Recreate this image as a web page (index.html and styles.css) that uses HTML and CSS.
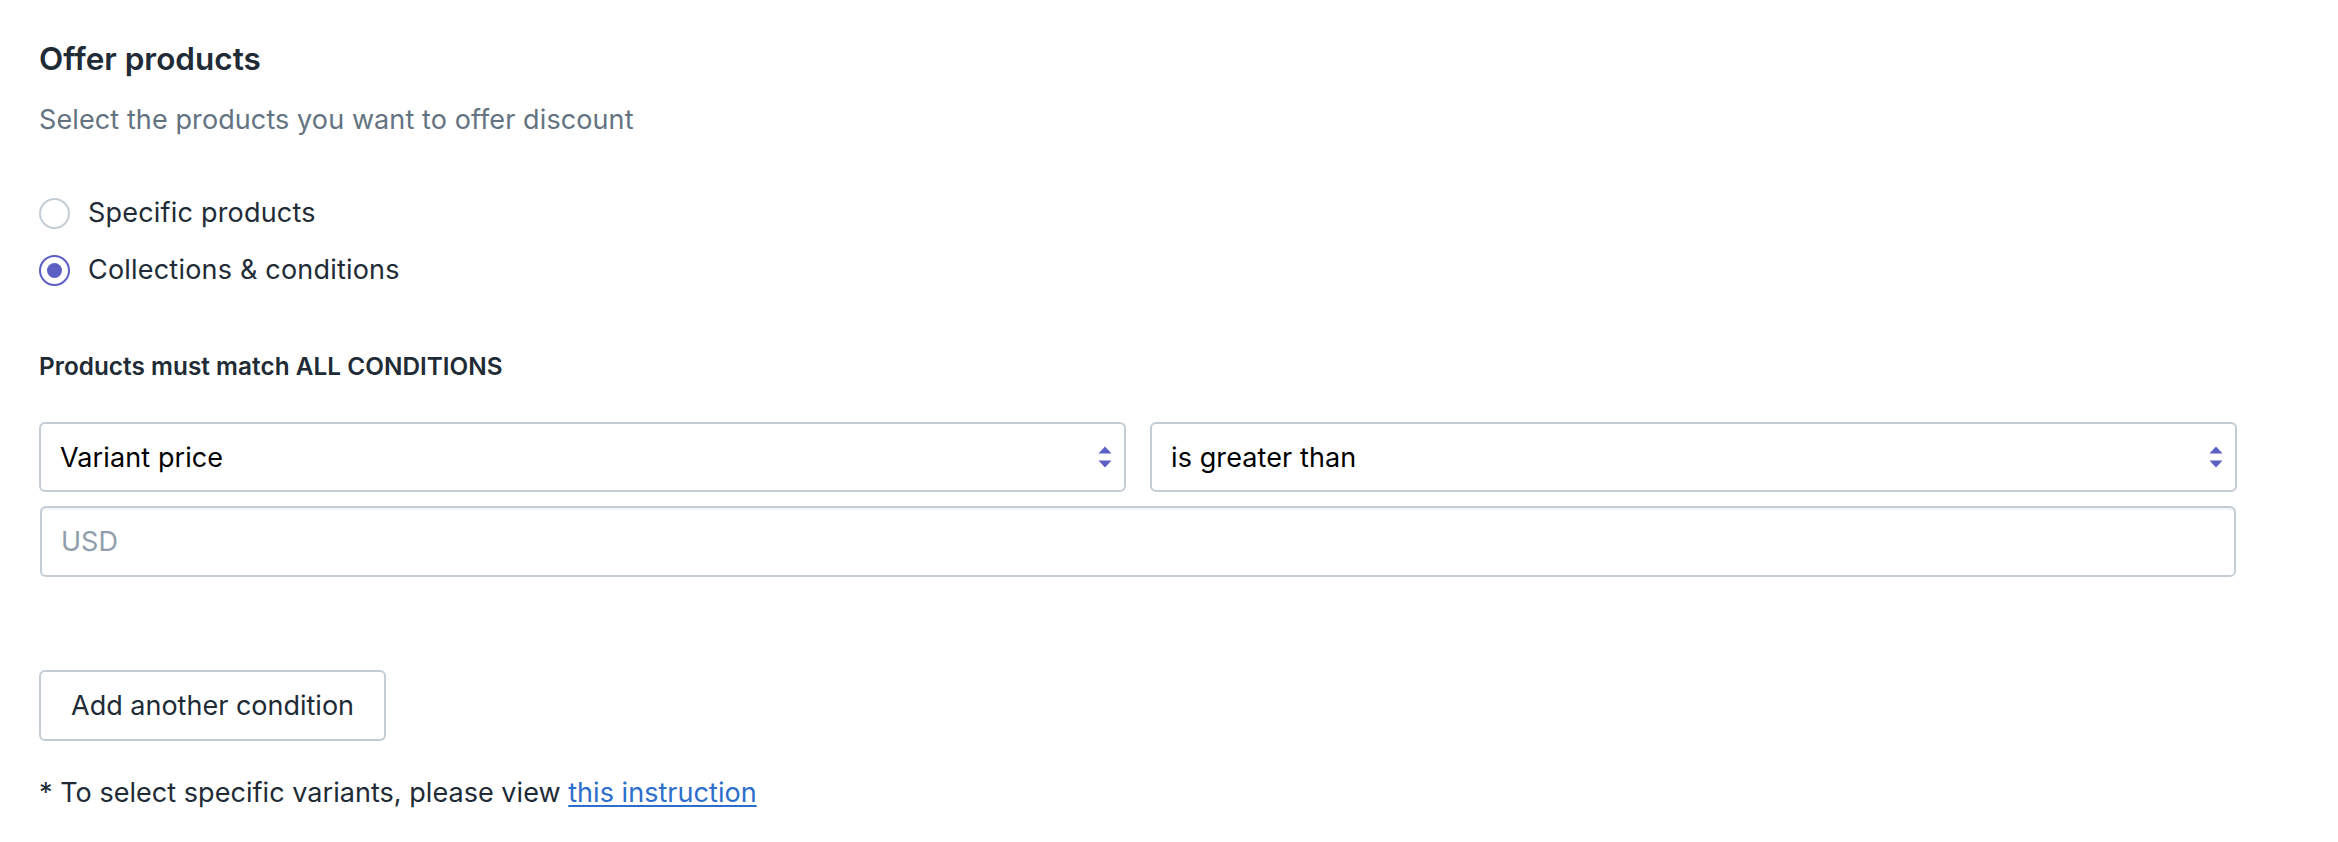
FILE: index.html
```html
<!DOCTYPE html>
<html lang="en">
<head>
<meta charset="utf-8">
<title>Offer products</title>
<link rel="stylesheet" href="styles.css">
</head>
<body>
<div class="page">
  <h1 class="title">Offer products</h1>
  <p class="subtitle">Select the products you want to offer discount</p>

  <div class="radio-list">
    <label class="radio-row">
      <span class="radio"></span>
      <span class="radio-text">Specific products</span>
    </label>
    <label class="radio-row">
      <span class="radio radio-checked"><span class="radio-dot"></span></span>
      <span class="radio-text">Collections &amp; conditions</span>
    </label>
  </div>

  <div class="cond-label">Products must match ALL CONDITIONS</div>

  <div class="cond-grid">
    <div class="select-wrap">
      <select class="select">
        <option>Variant price</option>
      </select>
      <svg class="select-arrows" width="14" height="22" viewBox="0 0 14 22"><path d="M0.5 7.5 L7 0.5 L13.5 7.5 Z M0.5 14.5 L13.5 14.5 L7 21.5 Z" fill="#5c5fc4"/></svg>
    </div>
    <div class="select-wrap">
      <select class="select">
        <option>is greater than</option>
      </select>
      <svg class="select-arrows" width="14" height="22" viewBox="0 0 14 22"><path d="M0.5 7.5 L7 0.5 L13.5 7.5 Z M0.5 14.5 L13.5 14.5 L7 21.5 Z" fill="#5c5fc4"/></svg>
    </div>
    <input class="text-input" type="text" placeholder="USD">
  </div>

  <button class="btn" type="button">Add another condition</button>

  <p class="note">* To select specific variants, please view <a href="#" class="link">this instruction</a></p>
</div>
</body>
</html>
```

FILE: styles.css
```css
html, body {
  margin: 0;
  padding: 0;
  background: #ffffff;
}

.page {
  padding: 41px 101px 0 39px;
  font-family: "Inter", "Noto Sans", sans-serif;
  color: #212b36;
}

.title {
  margin: 0;
  font-size: 31.5px;
  line-height: 36px;
  font-weight: 600;
  color: #212b36;
}

.subtitle {
  margin: 27px 0 0;
  font-size: 27px;
  line-height: 32px;
  letter-spacing: 0.1px;
  color: #637381;
}

.radio-list {
  margin-top: 61px;
  display: flex;
  flex-direction: column;
  gap: 25px;
}

.radio-row {
  display: flex;
  align-items: center;
  height: 32px;
  gap: 18px;
}

.radio {
  box-sizing: border-box;
  width: 31px;
  height: 31px;
  border-radius: 50%;
  border: 2px solid #c4cdd5;
  display: flex;
  align-items: center;
  justify-content: center;
  flex: none;
}

.radio-checked {
  border-color: #5c5fc4;
}

.radio-dot {
  width: 15px;
  height: 15px;
  border-radius: 50%;
  background: #5c5fc4;
}

.radio-text {
  font-size: 27px;
  line-height: 32px;
  letter-spacing: 0.2px;
  color: #212b36;
}

.cond-label {
  margin-top: 66px;
  font-size: 24.3px;
  line-height: 28px;
  font-weight: 600;
  letter-spacing: 0.05px;
  color: #212b36;
}

.cond-grid {
  margin-top: 42px;
  display: grid;
  grid-template-columns: 1fr 1fr;
  column-gap: 24px;
  row-gap: 14px;
}

.select-wrap {
  position: relative;
}

.select {
  -webkit-appearance: none;
  appearance: none;
  box-sizing: border-box;
  width: 100%;
  height: 70px;
  margin: 0;
  padding: 0 50px 0 19px;
  border: 2px solid #c4cdd5;
  border-radius: 6px;
  background: #ffffff;
  font-family: "Inter", "Noto Sans", sans-serif;
  font-size: 27px;
  letter-spacing: 0.1px;
  color: #000000;
  outline: none;
}

.select-arrows {
  position: absolute;
  right: 14px;
  top: 24px;
  pointer-events: none;
}

.text-input {
  grid-column: 1 / span 2;
  box-sizing: border-box;
  width: calc(100% - 2px);
  margin: 0 1px;
  height: 71px;
  padding: 0 19px;
  border: 2px solid #c4cdd5;
  border-radius: 6px;
  background: #ffffff;
  box-shadow: inset 0 2px 0 rgba(99, 115, 129, 0.07);
  font-family: "Inter", "Noto Sans", sans-serif;
  font-size: 27px;
  color: #212b36;
  outline: none;
}

.text-input::placeholder {
  color: #919eab;
}

.btn {
  margin-top: 93px;
  display: block;
  box-sizing: border-box;
  height: 71px;
  padding: 0 30px;
  border: 2px solid #c4cdd5;
  border-radius: 6px;
  background: #ffffff;
  font-family: "Inter", "Noto Sans", sans-serif;
  font-size: 27px;
  color: #212b36;
  cursor: pointer;
}

.note {
  margin: 36px 0 0;
  font-size: 27px;
  line-height: 32px;
  letter-spacing: 0.04px;
  color: #212b36;
}

.link {
  color: #2c6ecb;
  text-decoration: underline;
  text-decoration-thickness: 2px;
  text-underline-offset: 3px;
}
```
